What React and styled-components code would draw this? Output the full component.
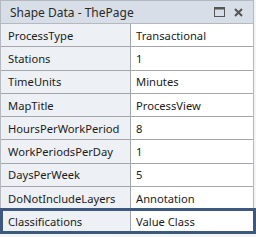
import React from 'react';
import styled, { createGlobalStyle } from 'styled-components';

const GlobalStyle = createGlobalStyle`
  html, body {
    margin: 0;
    padding: 0;
    background: #f3f4f6;
  }
  body {
    width: 256px;
    height: 237px;
    overflow: hidden;
  }
`;

const Panel = styled.div`
  width: 252px;
  border: 1px solid #b4b9c0;
  border-bottom: none;
  background: #ffffff;
  font-family: 'Noto Sans', 'Open Sans', sans-serif;
  color: #1b1b1b;
`;

const Header = styled.div`
  height: 22px;
  display: flex;
  align-items: center;
  justify-content: space-between;
  padding: 0 10px 0 9px;
  background: #d7dee7;
  border-bottom: 1px solid #b4b9c0;
  font-size: 12px;
  color: #2a2a2a;
`;

const HeaderIcons = styled.div`
  display: flex;
  align-items: center;
  gap: 9px;
`;

const Row = styled.div`
  position: relative;
  display: grid;
  grid-template-columns: 130px 1fr;
  height: 23.3px;
  box-sizing: border-box;
  border-bottom: 1px solid #a3a6aa;
  font-size: 11.2px;

  &::after {
    content: '';
    display: ${(p) => (p.$selected ? 'block' : 'none')};
    position: absolute;
    left: -1px;
    right: -3px;
    top: -2px;
    bottom: -1px;
    border: 3px solid #3d5a7e;
  }
`;

const Label = styled.div`
  display: flex;
  align-items: center;
  padding-left: 7px;
  background: #edf0f4;
  border-right: 1px solid #a3a6aa;
  white-space: nowrap;
`;

const Value = styled.div`
  display: flex;
  align-items: center;
  padding-left: 5px;
  white-space: nowrap;
`;

const rows = [
  ['ProcessType', 'Transactional'],
  ['Stations', '1'],
  ['TimeUnits', 'Minutes'],
  ['MapTitle', 'ProcessView'],
  ['HoursPerWorkPeriod', '8'],
  ['WorkPeriodsPerDay', '1'],
  ['DaysPerWeek', '5'],
  ['DoNotIncludeLayers', 'Annotation'],
  ['Classifications', 'Value Class'],
];

function MaximizeIcon() {
  return (
    <svg width="11" height="10" viewBox="0 0 11 10">
      <rect x="0.5" y="0.5" width="10" height="9" fill="none" stroke="#555" />
      <rect x="0" y="0" width="11" height="2.5" fill="#555" />
    </svg>
  );
}

function CloseIcon() {
  return (
    <svg width="9" height="9" viewBox="0 0 9 9">
      <path d="M1 1 L8 8 M8 1 L1 8" stroke="#555" strokeWidth="2" />
    </svg>
  );
}

export default function App() {
  return (
    <>
      <GlobalStyle />
      <Panel>
        <Header>
          <span>Shape Data - ThePage</span>
          <HeaderIcons>
            <MaximizeIcon />
            <CloseIcon />
          </HeaderIcons>
        </Header>
        {rows.map(([label, value], i) => (
          <Row key={label} $selected={i === rows.length - 1}>
            <Label>{label}</Label>
            <Value>{value}</Value>
          </Row>
        ))}
      </Panel>
    </>
  );
}
